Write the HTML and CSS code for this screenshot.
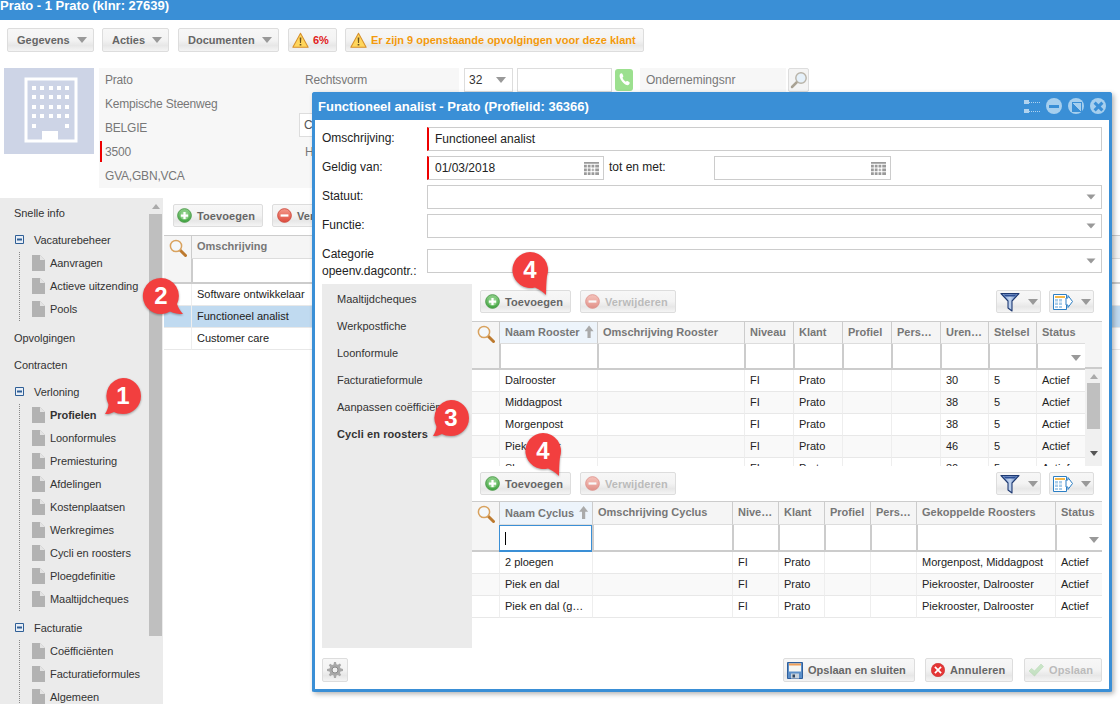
FILE: index.html
```html
<!DOCTYPE html>
<html lang="nl">
<head>
<meta charset="utf-8">
<title>Prato</title>
<link rel="stylesheet" href="styles.css">
</head>
<body>
<svg class="defs" aria-hidden="true">
  <defs>
    <linearGradient id="gGreen" x1="0" y1="0" x2="0" y2="1"><stop offset="0" stop-color="#8fd08a"/><stop offset="1" stop-color="#3fa33f"/></linearGradient>
    <linearGradient id="gRed" x1="0" y1="0" x2="0" y2="1"><stop offset="0" stop-color="#f49a8c"/><stop offset="1" stop-color="#dd4a3c"/></linearGradient>
    <linearGradient id="gFun" x1="0" y1="0" x2="1" y2="0"><stop offset="0" stop-color="#6f93cf"/><stop offset=".5" stop-color="#c3d5ef"/><stop offset="1" stop-color="#4d74b6"/></linearGradient>
    <symbol id="i-warn" viewBox="0 0 20 20"><path d="M10 1.500 19 18H1z" fill="#ffd65c" stroke="#d68f2a" stroke-width="1.200" stroke-linejoin="round"/><path d="M9 6.500h2l-.4 6.500H9.400zM9 14.200h2V16H9z" fill="#6b5320"/></symbol>
    <symbol id="i-plus" viewBox="0 0 16 16"><circle cx="8" cy="8" r="7.300" fill="url(#gGreen)" stroke="#4a9a48"/><circle cx="8" cy="8" r="4.600" fill="#8fd08a"/><path d="M6.800 4.200h2.400v2.600h2.600v2.400H9.200v2.600H6.800V9.200H4.200V6.800h2.600z" fill="#fff"/></symbol>
    <symbol id="i-minus" viewBox="0 0 16 16"><circle cx="8" cy="8" r="7.300" fill="url(#gRed)" stroke="#cf4b3f"/><path d="M3.800 6.800h8.400v2.400H3.800z" fill="#fff"/></symbol>
    <symbol id="i-search" viewBox="0 0 18 18"><path d="M11 11l5.500 5.500" stroke="#bd7a2e" stroke-width="3" stroke-linecap="round"/><circle cx="7" cy="7" r="5.600" fill="#f4f8fb" stroke="#d9a25e" stroke-width="1.500"/></symbol>
    <symbol id="i-find" viewBox="0 0 18 18"><path d="M7 11 2 16" stroke="#a9a294" stroke-width="2.500" stroke-linecap="round"/><circle cx="11" cy="7" r="5.200" fill="#e6f1fa" stroke="#b8b3a8" stroke-width="1.400"/></symbol>
    <symbol id="i-cal" viewBox="0 0 16 16"><path d="M0 1h16v2H0zM0 4h3v3H0zM4 4h3v3H4zM8 4h3v3H8zM12 4h4v3h-4zM0 8h3v3H0zM4 8h3v3H4zM12 8h4v3h-4zM0 12h3v3H0zM4 12h3v3H4zM8 12h3v3H8zM12 12h4v3h-4zM9 8h1v3H9zM8 9h3v1H8z" fill="#9a9a9a"/></symbol>
    <symbol id="i-doc" viewBox="0 0 13 16"><path d="M0 0h8l5 5v11H0z" fill="#b2b2b2"/><path d="M8 0l5 5H8z" fill="#e4e4e4"/></symbol>
    <symbol id="i-tog" viewBox="0 0 9 9"><path d="M.5.500h8v8h-8z" fill="#e8eef6" stroke="#2f5f96"/><path d="M2 3.500h5v2H2z" fill="#2f5f96"/></symbol>
    <symbol id="i-phone" viewBox="0 0 18 22"><rect width="18" height="22" rx="3" fill="#9ce08f"/><path d="M5 5c1-1 2-1 2.500 0l.8 2c.2.600-.2 1-.8 1.600.5 1.800 1.600 3.200 3.200 4.200.7-.6 1.100-1 1.700-.7l1.800 1c.8.500.6 1.500-.2 2.400-1.200 1.200-3 .6-5-1.100C6.500 12.300 3.500 8 5 5z" fill="#fff"/></symbol>
    <symbol id="i-building" viewBox="0 0 90 86"><path d="M22 11h50v62H22z" fill="none" stroke="#fff" stroke-width="3"/><path d="M38 73V63h16v10" fill="#fff"/><path d="M28 18h4v4h-4zM36 18h4v4h-4zM45 18h4v4h-4zM53 18h4v4h-4zM61 18h4v4h-4zM28 27h4v4h-4zM36 27h4v4h-4zM45 27h4v4h-4zM53 27h4v4h-4zM61 27h4v4h-4zM28 37h4v4h-4zM36 37h4v4h-4zM45 37h4v4h-4zM53 37h4v4h-4zM61 37h4v4h-4zM28 46h4v4h-4zM36 46h4v4h-4zM45 46h4v4h-4zM53 46h4v4h-4zM61 46h4v4h-4zM28 56h4v4h-4zM61 56h4v4h-4z" fill="#fff"/></symbol>
    <symbol id="i-funnel" viewBox="0 0 20 20"><path d="M1 1.500h18l-7 7.500v10l-4-3V9z" fill="url(#gFun)" stroke="#1f3a72" stroke-width="1.100" stroke-linejoin="round"/><path d="M3.500 2.500h13l-2 2h-9z" fill="#2c4f95"/></symbol>
    <symbol id="i-export" viewBox="0 0 20 16"><path d="M.5.500h13v15H.5z" fill="#fff" stroke="#2c7fc4"/><path d="M2 2h10v2H2z" fill="#f3b84a"/><path d="M2 5h3v2.500H2zM6 5h3v2.500H6zM2 8.500h3V11H2zM6 8.500h3V11H6zM2 12h3v2H2zM6 12h3v2H6z" fill="#a9cdea"/><path d="M13 4h2V1.500L19.500 7.500 15 13.500V11h-2z" fill="#fff" stroke="#2c7fc4"/></symbol>
    <symbol id="i-save" viewBox="0 0 16 17"><path d="M.5.500h15v16H.5z" fill="#5b8fc9" stroke="#2f5f9c"/><path d="M2 1.500h12v8H2z" fill="#f6f6f2"/><path d="M2 1.500h12v2H2z" fill="#ef9f58"/><path d="M4 11.500h8v5H4z" fill="#c9d3dd"/><path d="M5.500 12.500h2.500v3H5.500z" fill="#33475f"/></symbol>
    <symbol id="i-cancel" viewBox="0 0 14 14"><circle cx="7" cy="7" r="6.700" fill="#e53535" stroke="#c62c2c" stroke-width=".6"/><path d="M4.500 3.300 7 5.800l2.500-2.500 1.200 1.200L8.200 7l2.500 2.500-1.200 1.200L7 8.200l-2.500 2.500-1.200-1.200L5.800 7 3.300 4.500z" fill="#fff"/></symbol>
    <symbol id="i-check" viewBox="0 0 16 14"><path d="M1 8l2.500-2.500L6.500 8 13 1l2.500 2.500-9 9.500z" fill="#a6d8a2" stroke="#8cc488" stroke-width=".6"/></symbol>
    <symbol id="i-gear" viewBox="0 0 16 16"><path d="M7 0h2l.4 2.200 1.500.6 1.900-1.300 1.400 1.400-1.300 1.900.6 1.500L16 7v2l-2.500.4-.6 1.500 1.300 1.900-1.400 1.400-1.900-1.300-1.500.6L9 16H7l-.4-2.500-1.500-.6-1.900 1.300-1.400-1.400 1.300-1.900-.6-1.500L0 9V7l2.500-.4.600-1.500-1.300-1.900 1.400-1.400 1.900 1.300 1.500-.6z" fill="#a8a8a8"/><circle cx="8" cy="8" r="3" fill="#efefef" stroke="#8a8a8a"/></symbol>
    <symbol id="b-bl" viewBox="0 0 60 60"><path d="M30 6a18 18 0 0 1 0 36c-4 0-7-1-9-2-3 1.500-6 2.400-9 2 2-3 3.500-7 3.500-9.500A18 18 0 0 1 30 6z" fill="#f23f3f"/></symbol>
    <symbol id="b-br" viewBox="0 0 60 60"><path d="M30 6a18 18 0 0 1 16 26c1 3 3 7 6 10-4.500 0-9-.5-13-2.500A18 18 0 1 1 30 6z" fill="#f23f3f"/></symbol>
    <symbol id="b-bd" viewBox="0 0 60 60"><path d="M30 6a18 18 0 0 1 17 24c-.8 6-.8 12-1 19-3-3-7-6-11-7.600A18 18 0 1 1 30 6z" fill="#f23f3f"/></symbol>
  </defs>
</svg>

<header class="topbar">Prato - 1 Prato (klnr: 27639)</header>

<nav class="toolbar">
  <button class="btn menu m-geg">Gegevens<i class="caret"></i></button>
  <button class="btn menu m-act">Acties<i class="caret"></i></button>
  <button class="btn menu m-doc">Documenten<i class="caret"></i></button>
  <button class="btn warn m-pct"><svg class="ic20"><use href="#i-warn"/></svg><span class="pct">6%</span></button>
  <button class="btn warn m-msg"><svg class="ic20"><use href="#i-warn"/></svg><span class="msg">Er zijn 9 openstaande opvolgingen voor deze klant</span></button>
</nav>

<section class="info">
  <div class="logo"><svg class="logo-svg"><use href="#i-building"/></svg></div>
  <div class="card">
    <div class="card-row">Prato</div><div class="card-row">Rechtsvorm</div>
    <div class="card-row">Kempische Steenweg</div><div class="card-row"></div>
    <div class="card-row">BELGIE</div><div class="card-row"><span class="cinput">C</span></div>
    <div class="card-row req">3500</div><div class="card-row">H</div>
    <div class="card-row">GVA,GBN,VCA</div><div class="card-row"></div>
  </div>
  <div class="contact">
    <div class="field f-code">32<i class="caret"></i></div>
    <div class="field f-phone"></div>
    <svg class="phone"><use href="#i-phone"/></svg>
    <div class="ond">Ondernemingsnr</div>
    <button class="btn find"><svg class="ic18"><use href="#i-find"/></svg></button>
  </div>
</section>

<div class="workspace">
  <aside class="sidebar">
    <div class="tree">
      <div class="top">Snelle info</div>
      <div class="top grp"><svg class="tog"><use href="#i-tog"/></svg>Vacaturebeheer</div>
      <ul class="leaves">
        <li><svg class="doc"><use href="#i-doc"/></svg>Aanvragen</li>
        <li><svg class="doc"><use href="#i-doc"/></svg>Actieve uitzending</li>
        <li><svg class="doc"><use href="#i-doc"/></svg>Pools</li>
      </ul>
      <div class="top">Opvolgingen</div>
      <div class="top">Contracten</div>
      <div class="top grp"><svg class="tog"><use href="#i-tog"/></svg>Verloning</div>
      <ul class="leaves">
        <li class="cur"><svg class="doc"><use href="#i-doc"/></svg>Profielen</li>
        <li><svg class="doc"><use href="#i-doc"/></svg>Loonformules</li>
        <li><svg class="doc"><use href="#i-doc"/></svg>Premiesturing</li>
        <li><svg class="doc"><use href="#i-doc"/></svg>Afdelingen</li>
        <li><svg class="doc"><use href="#i-doc"/></svg>Kostenplaatsen</li>
        <li><svg class="doc"><use href="#i-doc"/></svg>Werkregimes</li>
        <li><svg class="doc"><use href="#i-doc"/></svg>Cycli en roosters</li>
        <li><svg class="doc"><use href="#i-doc"/></svg>Ploegdefinitie</li>
        <li><svg class="doc"><use href="#i-doc"/></svg>Maaltijdcheques</li>
      </ul>
      <div class="top grp lastgrp"><svg class="tog"><use href="#i-tog"/></svg>Facturatie</div>
      <ul class="leaves">
        <li><svg class="doc"><use href="#i-doc"/></svg>Coëfficiënten</li>
        <li><svg class="doc"><use href="#i-doc"/></svg>Facturatieformules</li>
        <li><svg class="doc"><use href="#i-doc"/></svg>Algemeen</li>
      </ul>
    </div>
    <div class="vscroll">
      <i class="arrow-up"></i>
      <div class="vthumb"></div>
    </div>
  </aside>
  <main class="main">
    <div class="main-tools">
      <button class="btn act a-add"><svg class="ic16"><use href="#i-plus"/></svg>Toevoegen</button>
      <button class="btn act a-del"><svg class="ic16"><use href="#i-minus"/></svg>Verwijderen</button>
    </div>
    <table class="grid grid-main">
      <colgroup><col class="c-s"><col></colgroup>
      <thead>
        <tr><th class="sc" rowspan="2"><svg class="ic18"><use href="#i-search"/></svg></th><th>Omschrijving</th></tr>
        <tr class="flt"><td></td></tr>
      </thead>
      <tbody>
        <tr><td></td><td>Software ontwikkelaar</td></tr>
        <tr class="sel"><td></td><td>Functioneel analist</td></tr>
        <tr><td></td><td>Customer care</td></tr>
      </tbody>
    </table>
  </main>
</div>

<section class="dialog">
  <header class="dlg-title">
    <span class="dlg-name">Functioneel analist - Prato (Profielid: 36366)</span>
    <i class="grip"></i>
    <i class="wbtn w-min"></i>
    <i class="wbtn w-max"></i>
    <i class="wbtn w-close"></i>
  </header>
  <div class="dlg-body">
    <div class="frow"><label>Omschrijving:</label><div class="inp req-in grow">Functioneel analist</div></div>
    <div class="frow"><label>Geldig van:</label><div class="inp req-in date">01/03/2018<svg class="cal"><use href="#i-cal"/></svg></div><span class="tot">tot en met:</span><div class="inp date"><svg class="cal"><use href="#i-cal"/></svg></div></div>
    <div class="frow"><label>Statuut:</label><div class="inp grow combo"><i class="caret"></i></div></div>
    <div class="frow"><label>Functie:</label><div class="inp grow combo"><i class="caret"></i></div></div>
    <div class="frow frow-cat"><label class="two">Categorie<br>opeenv.dagcontr.:</label><div class="inp grow combo"><i class="caret"></i></div></div>

    <div class="tabs">
      <ul class="tablist">
        <li>Maaltijdcheques</li>
        <li>Werkpostfiche</li>
        <li>Loonformule</li>
        <li>Facturatieformule</li>
        <li>Aanpassen coëfficiënten</li>
        <li class="cur">Cycli en roosters</li>
      </ul>
      <div class="tabpane">
        <div class="gtools">
          <button class="btn act g-add"><svg class="ic16"><use href="#i-plus"/></svg>Toevoegen</button>
          <button class="btn act g-del off"><svg class="ic16"><use href="#i-minus"/></svg>Verwijderen</button>
          <span class="spacer"></span>
          <button class="btn tool"><svg class="ic20"><use href="#i-funnel"/></svg><i class="caret"></i></button>
          <button class="btn tool"><svg class="ic20"><use href="#i-export"/></svg><i class="caret"></i></button>
        </div>
        <div class="gwrap g1">
          <table class="grid grid-a">
            <colgroup><col class="c-s"><col class="a1"><col class="a2"><col class="a3"><col class="a3"><col class="a3"><col class="a3"><col class="a4"><col class="a4"><col></colgroup>
            <thead>
              <tr><th class="sc" rowspan="2"><svg class="ic18"><use href="#i-search"/></svg></th><th class="sorted">Naam Rooster<i class="up"></i></th><th>Omschrijving Rooster</th><th>Niveau</th><th>Klant</th><th>Profiel</th><th>Pers…</th><th>Uren…</th><th>Stelsel</th><th>Status</th></tr>
              <tr class="flt"><td></td><td></td><td></td><td></td><td></td><td></td><td></td><td></td><td class="pick"><i class="caret"></i></td></tr>
            </thead>
            <tbody>
              <tr><td></td><td>Dalrooster</td><td></td><td>FI</td><td>Prato</td><td></td><td></td><td>30</td><td>5</td><td>Actief</td></tr>
              <tr><td></td><td>Middagpost</td><td></td><td>FI</td><td>Prato</td><td></td><td></td><td>38</td><td>5</td><td>Actief</td></tr>
              <tr><td></td><td>Morgenpost</td><td></td><td>FI</td><td>Prato</td><td></td><td></td><td>38</td><td>5</td><td>Actief</td></tr>
              <tr><td></td><td>Piekrooster</td><td></td><td>FI</td><td>Prato</td><td></td><td></td><td>46</td><td>5</td><td>Actief</td></tr>
              <tr><td></td><td>Slaaprooster</td><td></td><td>FI</td><td>Prato</td><td></td><td></td><td>30</td><td>5</td><td>Actief</td></tr>
            </tbody>
          </table>
          <div class="gscroll">
            <div class="ghead"></div>
            <div class="gtrack"><i class="arrow-up"></i><div class="gthumb"></div><i class="arrow-down"></i></div>
          </div>
        </div>
        <div class="gtools second">
          <button class="btn act g-add"><svg class="ic16"><use href="#i-plus"/></svg>Toevoegen</button>
          <button class="btn act g-del off"><svg class="ic16"><use href="#i-minus"/></svg>Verwijderen</button>
          <span class="spacer"></span>
          <button class="btn tool"><svg class="ic20"><use href="#i-funnel"/></svg><i class="caret"></i></button>
          <button class="btn tool"><svg class="ic20"><use href="#i-export"/></svg><i class="caret"></i></button>
        </div>
        <table class="grid grid-b">
          <colgroup><col class="c-s"><col class="b1"><col class="b2"><col class="b3"><col class="b3"><col class="b3"><col class="b3"><col class="b4"><col></colgroup>
          <thead>
            <tr><th class="sc" rowspan="2"><svg class="ic18"><use href="#i-search"/></svg></th><th class="sorted">Naam Cyclus<i class="up"></i></th><th>Omschrijving Cyclus</th><th>Nive…</th><th>Klant</th><th>Profiel</th><th>Pers…</th><th>Gekoppelde Roosters</th><th>Status</th></tr>
            <tr class="flt"><td class="focus"><i class="cursor"></i></td><td></td><td></td><td></td><td></td><td></td><td></td><td class="pick"><i class="caret"></i></td></tr>
          </thead>
          <tbody>
            <tr><td></td><td>2 ploegen</td><td></td><td>FI</td><td>Prato</td><td></td><td></td><td>Morgenpost, Middagpost</td><td>Actief</td></tr>
            <tr><td></td><td>Piek en dal</td><td></td><td>FI</td><td>Prato</td><td></td><td></td><td>Piekrooster, Dalrooster</td><td>Actief</td></tr>
            <tr><td></td><td>Piek en dal (g…</td><td></td><td>FI</td><td>Prato</td><td></td><td></td><td>Piekrooster, Dalrooster</td><td>Actief</td></tr>
          </tbody>
        </table>
      </div>
    </div>

    <footer class="dlg-foot">
      <button class="btn gear"><svg class="ic16"><use href="#i-gear"/></svg></button>
      <span class="spacer"></span>
      <button class="btn act f-save"><svg class="s-save"><use href="#i-save"/></svg>Opslaan en sluiten</button>
      <button class="btn act f-cancel"><svg class="s-cancel"><use href="#i-cancel"/></svg>Annuleren</button>
      <button class="btn act f-ok off"><svg class="ic16"><use href="#i-check"/></svg>Opslaan</button>
    </footer>
  </div>
</section>

<div class="balloon p1"><svg><use href="#b-bl"/></svg><span>1</span></div>
<div class="balloon p2"><svg><use href="#b-br"/></svg><span>2</span></div>
<div class="balloon p3"><svg><use href="#b-bl"/></svg><span>3</span></div>
<div class="balloon p4a"><svg><use href="#b-bd"/></svg><span>4</span></div>
<div class="balloon p4b"><svg><use href="#b-bd"/></svg><span>4</span></div>
</body>
</html>
```
FILE: styles.css
```css
* { box-sizing: border-box; }
html, body { margin: 0; padding: 0; }
body {
  width: 1120px; height: 704px; overflow: hidden; position: relative;
  background: #fff; color: #222;
  font: 11px/1.2 "Liberation Sans", Arial, sans-serif;
}
ul { list-style: none; margin: 0; padding: 0; }
i { display: block; font-style: normal; }
svg { display: block; flex: none; }
.defs { width: 0; height: 0; }
.ic16 { width: 16px; height: 16px; }
.ic18 { width: 18px; height: 18px; }
.ic20 { width: 20px; height: 20px; }
.spacer { flex: 1; }

.caret { width: 0; height: 0; border: 5px solid transparent; border-top: 6px solid #999; border-bottom: 0; flex: none; }

/* buttons */
.btn {
  display: flex; align-items: center; height: 24px; padding: 0; margin: 0;
  border: 1px solid #ddd; border-radius: 2px;
  background: linear-gradient(#f7f7f7 0, #f3f3f3 50%, #e7e7e7 75%, #f4f4f4 100%);
  color: #666; font: bold 11px "Liberation Sans", Arial, sans-serif; white-space: nowrap;
}

/* top */
.topbar {
  height: 20px; background: #3a8fd6; color: #fff;
  font: bold 13px/12px "Liberation Sans", Arial, sans-serif;
}
.toolbar { display: flex; padding: 8px 0 0 7px; gap: 8px; height: 48px; }
.menu { justify-content: space-between; padding: 0 6px 0 9px; }
.m-geg { width: 87px; }
.m-act { width: 67px; }
.m-doc { width: 101px; margin-left: 1px; }
.warn { padding-left: 3px; gap: 4px; }
.m-pct { width: 49px; margin-left: 1px; }
.m-pct .ic20, .m-msg .ic20 { width: 17px; height: 17px; }
.pct { color: #e02020; }
.m-msg { width: 299px; padding-left: 4px; }
.msg { color: #f39a0c; }

/* info */
.info { display: flex; height: 130px; padding-left: 4px; align-items: flex-start; }
.logo { width: 90px; height: 86px; background: #cdd4e6; }
.logo-svg { width: 90px; height: 86px; }
.card {
  width: 360px; height: 120px; margin-left: 5px; background: #f7f7f7; padding-left: 6px;
  display: grid; grid-template-columns: 200px 1fr; grid-auto-rows: 24px; color: #777; font-size: 12px;
}
.card-row { line-height: 24px; white-space: nowrap; letter-spacing: -.2px; }
.req { position: relative; }
.req::before { content: ""; position: absolute; left: -5px; top: 1px; width: 2px; height: 21px; background: #e00; }
.cinput { display: block; height: 24px; width: 120px; margin-left: -6px; padding-left: 4px; background: #fff; border: 1px solid #ddd; color: #555; line-height: 22px; margin-top: -3px; }
.contact { display: flex; margin-left: 5px; align-items: center; height: 24px; font-size: 12px; }
.field { height: 24px; border: 1px solid #ddd; background: #fff; color: #333; display: flex; align-items: center; }
.f-code { width: 49px; padding: 0 6px 0 4px; justify-content: space-between; }
.f-phone { width: 95px; margin-left: 4px; }
.phone { width: 18px; height: 22px; margin-left: 3px; }
.ond { width: 146px; height: 24px; margin-left: 7px; background: #f7f7f7; color: #777; line-height: 24px; padding-left: 6px; }
.find { width: 21px; margin-left: 2px; justify-content: center; background: #f4f4f4; }

/* workspace */
.workspace { display: flex; height: 506px; overflow: hidden; }
.sidebar { width: 163px; flex: none; background: #ebebeb; display: flex; }
.tree { width: 149px; padding-top: 3px; overflow: hidden; color: #333; letter-spacing: -.06px; }
.top { height: 24px; line-height: 24px; padding-left: 14px; margin-top: 3px; white-space: nowrap; }
.top:first-child { margin-top: 0; }
.grp { padding-left: 34px; position: relative; }
.tog { width: 9px; height: 9px; position: absolute; left: 15px; top: 7px; }
.lastgrp { margin-top: 5px; }
.leaves { margin: 0 0 5px 19px; border-left: 1px dotted #888; }
.leaves li { height: 23px; line-height: 23px; padding-left: 30px; position: relative; white-space: nowrap; }
.doc { width: 13px; height: 16px; position: absolute; left: 12px; top: 3px; }
.cur { font-weight: bold; }
.vscroll { width: 13px; height: 438px; background: #ebebeb; padding-top: 6px; }
.arrow-up { width: 0; height: 0; margin: 0 auto; border: 4px solid transparent; border-bottom: 5px solid #aaa; border-top: 0; }
.arrow-down { width: 0; height: 0; margin: 0 auto; border: 4px solid transparent; border-top: 5px solid #555; border-bottom: 0; }
.vthumb { width: 13px; height: 422px; margin-top: 5px; background: #bfbfbf; }
.main { flex: 1; margin-left: 1px; min-width: 0; }
.main-tools { display: flex; gap: 9px; padding: 6px 0 0 9px; height: 37px; }

.act { gap: 5px; padding-left: 4px; height: 23px; letter-spacing: .1px; }
.act .ic16 { width: 15px; height: 15px; }
.a-add { width: 90px; padding-left: 3px; }
.a-del { width: 96px; }
.off { color: #bbb; }
.off svg { opacity: .55; }

/* grids */
.grid { border-collapse: separate; border-spacing: 0; table-layout: fixed; font-size: 11px; }
.grid th {
  height: 24px; padding: 0 5px; background: #f5f5f5; color: #777; font-weight: bold; text-align: left;
  border-top: 1px solid #ccc; border-bottom: 1px solid #ddd; border-left: 1px solid #ccc;
  white-space: nowrap; overflow: hidden;
}
.grid th.sc { vertical-align: top; padding: 3px 0 0 5px; border-left: 0; border-bottom: 2px solid #ccc; }
.grid th.sorted { background: #edf4fb; }
.grid-a th { height: 23px; }
.up { display: inline-block; width: 9px; height: 13px; margin-left: 5px; vertical-align: -2px; background: #aaa; clip-path: polygon(50% 0, 100% 45%, 68% 45%, 68% 100%, 32% 100%, 32% 45%, 0 45%); }
.flt td { height: 25px; background: #fff; border-left: 2px solid #ccc; border-bottom: 2px solid #ccc; padding: 0; }
.grid-a .flt td { height: 26px; }
.grid-b .flt td { height: 27px; }
.pick .caret { margin: 0 auto; transform: translate(14px, 2px); }
.grid .flt td.focus { border: 1px solid #3a8fd6; border-bottom: 2px solid #3a8fd6; }
.cursor { width: 1px; height: 13px; margin-left: 5px; background: #000; }
.grid tbody td {
  height: 22px; padding: 0 5px; border-left: 1px solid #eee; border-bottom: 1px solid #e8e8e8;
  white-space: nowrap; overflow: hidden; color: #222;
}
.grid tbody td:first-child { border-left: 0; }
.grid tbody tr:nth-child(even) td { background: #f9f9f9; }
.c-s { width: 27px; }
.grid-main { width: 956px; }
.grid-main tbody tr.sel td { background: #c0daf0; }

/* dialog */
.dialog {
  position: absolute; left: 312px; top: 92px; width: 800px; height: 600px;
  border: 3px solid #3a8fd6; border-top: 0; border-radius: 3px 3px 2px 2px; background: #fff;
  box-shadow: 2px 2px 5px rgba(0,0,0,.3);
}
.dlg-title { display: flex; align-items: center; height: 28px; margin: 0 -3px; padding: 0 6px; background: #3a8fd6; color: #fff; border-radius: 3px 3px 0 0; }
.dlg-name { flex: 1; font: bold 13px "Liberation Sans", Arial, sans-serif; }
.grip { width: 16px; height: 13px; background:
  linear-gradient(#fff,#fff) 0 0/5px 4px no-repeat,
  linear-gradient(#fff,#fff) 0 9px/5px 4px no-repeat,
  repeating-linear-gradient(90deg,#fff 0 1px,transparent 1px 2px) 5px 2px/11px 1px no-repeat,
  repeating-linear-gradient(90deg,#fff 0 1px,transparent 1px 2px) 5px 11px/11px 1px no-repeat;
  opacity: .6; }
.wbtn { width: 16px; height: 16px; border-radius: 50%; background-color: #a6cfee; margin-left: 6px; position: relative; }
.w-min::after { content: ""; position: absolute; left: 3px; right: 3px; top: 6.5px; height: 3px; background: #3a8fd6; }
.w-max::after { content: ""; position: absolute; left: 4px; top: 4px; width: 8px; height: 8px; border: 1.5px solid #3a8fd6; background: linear-gradient(45deg, #3a8fd6 50%, transparent 50%); }
.w-close::before, .w-close::after { content: ""; position: absolute; left: 2.5px; top: 6.5px; width: 11px; height: 3px; background: #3a8fd6; transform: rotate(45deg); }
.w-close::after { transform: rotate(-45deg); }

.dlg-body { padding: 7px 7px 0; }
.frow { display: flex; align-items: center; height: 24px; margin-bottom: 5px; font-size: 12px; }
.frow label { width: 105px; flex: none; margin-top: -2px; color: #222; }
.frow .two { line-height: 17px; margin-top: 4px; }
.frow-cat { margin-top: 11px; margin-bottom: 11px; }
.inp { height: 24px; border: 1px solid #ccc; display: flex; align-items: center; padding-left: 5px; position: relative; color: #222; }
.grow { flex: 1; }
.req-in { border-left: 2px solid #e00; padding-left: 6px; }
.date { width: 177px; }
.tot { width: 105px; margin-left: 5px; margin-top: -2px; flex: none; }
.cal { width: 15px; height: 15px; position: absolute; right: 4px; top: 4px; }
.combo .caret { margin-left: auto; margin-right: 5px; transform: scale(.9,.8); }

.tabs { display: flex; height: 364px; }
.tablist { width: 150px; flex: none; background: #ebebeb; padding: 2px 0 0 15px; color: #333; overflow: hidden; }
.tablist li { height: 27px; line-height: 27px; white-space: nowrap; }
.tablist .cur { letter-spacing: .1px; }
.tabpane { width: 630px; flex: none; }
.gtools { display: flex; gap: 9px; padding: 6px 8px 0; height: 37px; align-items: flex-start; }
.gtools.second { height: 29px; padding-top: 0; margin-top: 6px; }
.g-add { width: 91px; }
.g-del { width: 96px; }
.tool { width: 45px; height: 23px; gap: 8px; padding-left: 3px; margin-left: -1px; }
.gwrap { display: flex; height: 145px; overflow: hidden; }
.grid-a { width: 613px; }
.a1 { width: 98px; } .a2 { width: 147px; } .a3 { width: 49px; } .a4 { width: 48px; }
.gscroll { width: 17px; flex: none; }
.ghead { height: 48px; background: #f5f5f5; border-top: 1px solid #ccc; border-bottom: 2px solid #ccc; }
.gtrack { height: 97px; background: #f0f0f0; padding-top: 5px; display: flex; flex-direction: column; }
.gtrack .gthumb { width: 13px; height: 46px; margin: 4px 0 0 2px; background: #bfbfbf; }
.gtrack .arrow-down { margin-top: 22px; }
.grid-b { width: 630px; }
.b1 { width: 93px; } .b2 { width: 140px; } .b3 { width: 46px; } .b4 { width: 139px; }

.dlg-foot { display: flex; margin-top: 10px; height: 24px; }
.gear { width: 26px; justify-content: center; }
.f-save { width: 132px; height: 24px; padding-left: 3px; letter-spacing: 0; }
.s-save { width: 16px; height: 17px; }
.f-cancel { width: 88px; height: 24px; margin-left: 10px; padding-left: 5px; }
.s-cancel { width: 14px; height: 14px; }
.f-ok { width: 78px; height: 24px; margin-left: 11px; padding-left: 3px; }
.f-ok .ic16 { width: 16px; height: 14px; }

/* balloons */
.balloon { position: absolute; width: 60px; height: 60px; }
.balloon svg { width: 60px; height: 60px; filter: drop-shadow(0 1px 1px rgba(0,0,0,.35)); }
.balloon span { position: absolute; left: 0; top: 6px; width: 60px; text-align: center; color: #fff; font: bold 24px/36px "Liberation Sans", Arial, sans-serif; }
.p1 { left: 93px; top: 372px; }
.p2 { left: 131px; top: 272px; }
.p3 { left: 421px; top: 394px; }
.p4a { left: 500px; top: 246px; }
.p4b { left: 513px; top: 427px; }
```
